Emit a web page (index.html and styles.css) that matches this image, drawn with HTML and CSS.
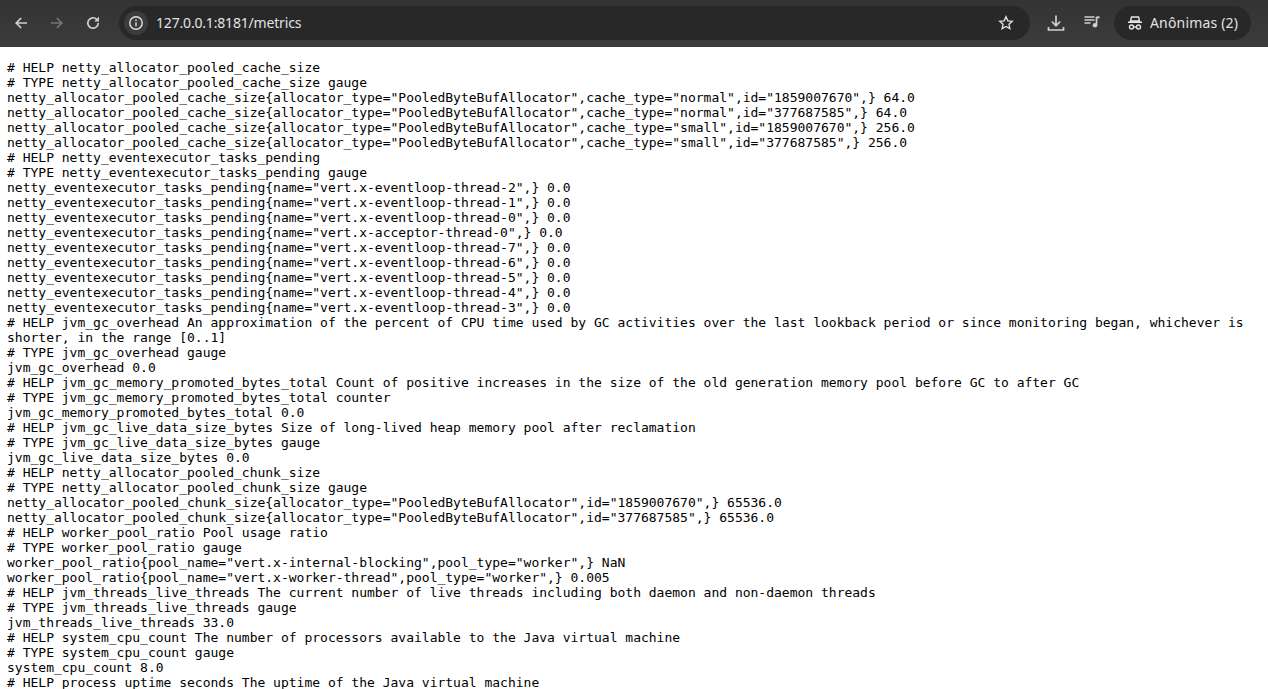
FILE: index.html
```html
<!DOCTYPE html>
<html lang="pt">
<head>
<meta charset="utf-8">
<title>127.0.0.1:8181/metrics</title>
<link rel="stylesheet" href="styles.css">
</head>
<body>
<header class="toolbar">
  <svg class="nav-icon" viewBox="0 0 16 16"><path d="M14 8H3.500M8.200 3 3.200 8l5 5" fill="none" stroke="#d0d0d0" stroke-width="1.700"/></svg>
  <svg class="nav-icon" viewBox="0 0 16 16"><path d="M2 8h10.500M7.800 3l5 5-5 5" fill="none" stroke="#767676" stroke-width="1.700"/></svg>
  <svg class="nav-icon" viewBox="0 0 16 16"><path d="M13.200 8a5.200 5.200 0 1 1-1.500-3.700" fill="none" stroke="#d0d0d0" stroke-width="1.700"/><path d="M14 1.600v4.800H9.200z" fill="#d0d0d0"/></svg>
  <div class="omnibox">
    <span class="info-chip"><svg class="info-icon" viewBox="0 0 16 16"><circle cx="8" cy="8" r="6.200" fill="none" stroke="#e3e3e3" stroke-width="1.400"/><path d="M8 7.200v4M8 4.400v1.500" stroke="#e3e3e3" stroke-width="1.400"/></svg></span>
    <span class="url">127.0.0.1:8181/metrics</span>
    <svg class="star" viewBox="0 0 16 16"><path d="m8 1.800 1.850 4.050 4.400.5-3.270 3 .9 4.350L8 11.500l-3.880 2.200.9-4.350-3.270-3 4.400-.5z" fill="none" stroke="#dcdcdc" stroke-width="1.400"/></svg>
  </div>
  <svg class="download" viewBox="0 0 18 18"><path d="M9 1.500v10M4.800 7.500 9 11.700l4.200-4.200M1.500 13v3h15v-3" fill="none" stroke="#d0d0d0" stroke-width="1.700"/></svg>
  <svg class="media" viewBox="0 0 16 16"><path d="M0.500 3h10M0.500 6h10M0.500 9h6" stroke="#d0d0d0" stroke-width="1.300"/><path d="M12.500 3v8" stroke="#d0d0d0" stroke-width="1.700"/><path d="M12.500 2.300h3v2h-3z" fill="#d0d0d0"/><circle cx="11" cy="11.300" r="2.300" fill="#d0d0d0"/></svg>
  <div class="profile">
    <svg class="incognito" viewBox="0 0 16 16"><path d="M4.500 2h7l1 4h-9zM1 7.300h14" fill="none" stroke="#e3e3e3" stroke-width="1.400"/><circle cx="4.500" cy="12" r="2" fill="none" stroke="#e3e3e3" stroke-width="1.400"/><circle cx="11.500" cy="12" r="2" fill="none" stroke="#e3e3e3" stroke-width="1.400"/><path d="M6.500 12h3" stroke="#e3e3e3" stroke-width="1.400"/></svg>
    <span class="profile-name">Anônimas (2)</span>
  </div>
</header>
<pre class="metrics"># HELP netty_allocator_pooled_cache_size  
# TYPE netty_allocator_pooled_cache_size gauge
netty_allocator_pooled_cache_size{allocator_type="PooledByteBufAllocator",cache_type="normal",id="1859007670",} 64.0
netty_allocator_pooled_cache_size{allocator_type="PooledByteBufAllocator",cache_type="normal",id="377687585",} 64.0
netty_allocator_pooled_cache_size{allocator_type="PooledByteBufAllocator",cache_type="small",id="1859007670",} 256.0
netty_allocator_pooled_cache_size{allocator_type="PooledByteBufAllocator",cache_type="small",id="377687585",} 256.0
# HELP netty_eventexecutor_tasks_pending  
# TYPE netty_eventexecutor_tasks_pending gauge
netty_eventexecutor_tasks_pending{name="vert.x-eventloop-thread-2",} 0.0
netty_eventexecutor_tasks_pending{name="vert.x-eventloop-thread-1",} 0.0
netty_eventexecutor_tasks_pending{name="vert.x-eventloop-thread-0",} 0.0
netty_eventexecutor_tasks_pending{name="vert.x-acceptor-thread-0",} 0.0
netty_eventexecutor_tasks_pending{name="vert.x-eventloop-thread-7",} 0.0
netty_eventexecutor_tasks_pending{name="vert.x-eventloop-thread-6",} 0.0
netty_eventexecutor_tasks_pending{name="vert.x-eventloop-thread-5",} 0.0
netty_eventexecutor_tasks_pending{name="vert.x-eventloop-thread-4",} 0.0
netty_eventexecutor_tasks_pending{name="vert.x-eventloop-thread-3",} 0.0
# HELP jvm_gc_overhead An approximation of the percent of CPU time used by GC activities over the last lookback period or since monitoring began, whichever is shorter, in the range [0..1]
# TYPE jvm_gc_overhead gauge
jvm_gc_overhead 0.0
# HELP jvm_gc_memory_promoted_bytes_total Count of positive increases in the size of the old generation memory pool before GC to after GC
# TYPE jvm_gc_memory_promoted_bytes_total counter
jvm_gc_memory_promoted_bytes_total 0.0
# HELP jvm_gc_live_data_size_bytes Size of long-lived heap memory pool after reclamation
# TYPE jvm_gc_live_data_size_bytes gauge
jvm_gc_live_data_size_bytes 0.0
# HELP netty_allocator_pooled_chunk_size  
# TYPE netty_allocator_pooled_chunk_size gauge
netty_allocator_pooled_chunk_size{allocator_type="PooledByteBufAllocator",id="1859007670",} 65536.0
netty_allocator_pooled_chunk_size{allocator_type="PooledByteBufAllocator",id="377687585",} 65536.0
# HELP worker_pool_ratio Pool usage ratio
# TYPE worker_pool_ratio gauge
worker_pool_ratio{pool_name="vert.x-internal-blocking",pool_type="worker",} NaN
worker_pool_ratio{pool_name="vert.x-worker-thread",pool_type="worker",} 0.005
# HELP jvm_threads_live_threads The current number of live threads including both daemon and non-daemon threads
# TYPE jvm_threads_live_threads gauge
jvm_threads_live_threads 33.0
# HELP system_cpu_count The number of processors available to the Java virtual machine
# TYPE system_cpu_count gauge
system_cpu_count 8.0
# HELP process_uptime_seconds The uptime of the Java virtual machine</pre>
</body>
</html>
```
FILE: styles.css
```css
html, body {
  margin: 0;
  height: 689px;
  overflow: hidden;
  background: #fff;
}
.toolbar {
  height: 47px;
  background: linear-gradient(#333333, #3c3c3c);
  display: flex;
  align-items: center;
  padding: 0 14px 1px 13px;
  box-sizing: border-box;
}
.nav-icon {
  width: 16px;
  height: 16px;
  margin-right: 20px;
  flex: none;
}
.omnibox {
  width: 911px;
  height: 34px;
  margin-left: -2px;
  border-radius: 17px;
  background: #282828;
  display: flex;
  align-items: center;
  padding: 0 16px 0 5px;
  box-sizing: border-box;
  flex: none;
}
.info-chip {
  width: 24px;
  height: 24px;
  border-radius: 50%;
  background: #3c3c3c;
  display: flex;
  align-items: center;
  justify-content: center;
  flex: none;
}
.info-icon {
  width: 16px;
  height: 16px;
}
.url {
  flex: 1;
  margin-left: 8px;
  padding-bottom: 2px;
  font: 14px "Noto Sans", "Open Sans", sans-serif;
  letter-spacing: -0.18px;
  color: #e3e3e3;
}
.star {
  width: 16px;
  height: 16px;
  flex: none;
}
.download {
  width: 18px;
  height: 18px;
  margin-left: 17px;
  flex: none;
}
.media {
  width: 16px;
  height: 16px;
  margin-left: 19px;
  margin-top: -2px;
  flex: none;
}
.profile {
  width: 137px;
  height: 34px;
  margin-left: 14px;
  border-radius: 17px;
  background: #282828;
  display: flex;
  align-items: center;
  padding-left: 13px;
  box-sizing: border-box;
  flex: none;
}
.incognito {
  width: 16px;
  height: 16px;
  flex: none;
}
.profile-name {
  margin-left: 7px;
  padding-bottom: 2px;
  font: 14px "Noto Sans", "Open Sans", sans-serif;
  letter-spacing: 0.17px;
  color: #e3e3e3;
  white-space: nowrap;
}
.metrics {
  margin: 13px 8px 0 7px;
  font: 13px/15px "DejaVu Sans Mono", monospace;
  color: #000;
  white-space: pre-wrap;
  word-wrap: break-word;
}
```
